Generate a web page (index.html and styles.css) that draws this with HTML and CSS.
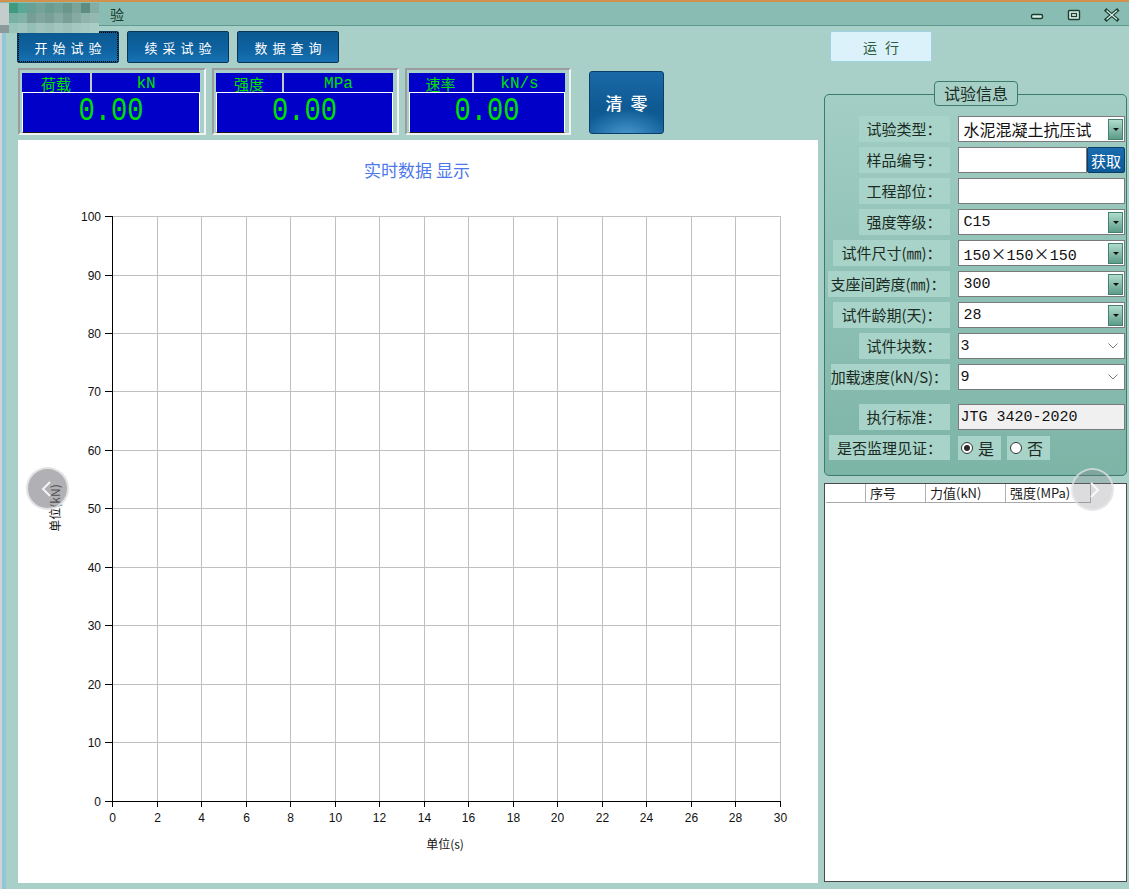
FILE: index.html
```html
<!DOCTYPE html>
<html lang="zh-CN">
<head>
<meta charset="utf-8">
<title>试验</title>
<link rel="stylesheet" href="styles.css">
</head>
<body>
<div class="window">
  <header class="titlebar">
    <svg class="mosaic" width="100" height="30" viewBox="0 0 100 30">
      <rect x="0" y="0" width="9" height="22" fill="#c4cccc"/>
      <rect x="0" y="22" width="9" height="8" fill="#8a9a9a"/>
      <rect x="9" y="0" width="9" height="10" fill="#3f9a7e"/><rect x="18" y="0" width="9" height="10" fill="#5aa898"/><rect x="27" y="0" width="9" height="10" fill="#68a096"/><rect x="36" y="0" width="9" height="10" fill="#76a398"/><rect x="45" y="0" width="9" height="10" fill="#6c9c90"/><rect x="54" y="0" width="9" height="10" fill="#74a196"/><rect x="63" y="0" width="9" height="10" fill="#6a968a"/><rect x="72" y="0" width="9" height="10" fill="#7ca398"/><rect x="81" y="0" width="9" height="10" fill="#5e8c7e"/><rect x="90" y="0" width="9" height="10" fill="#86ada3"/>
      <rect x="9" y="10" width="9" height="10" fill="#78b0a4"/><rect x="18" y="10" width="9" height="10" fill="#80b2a8"/><rect x="27" y="10" width="9" height="10" fill="#769e96"/><rect x="36" y="10" width="9" height="10" fill="#80a69e"/><rect x="45" y="10" width="9" height="10" fill="#78a098"/><rect x="54" y="10" width="9" height="10" fill="#84aaa2"/><rect x="63" y="10" width="9" height="10" fill="#789e96"/><rect x="72" y="10" width="9" height="10" fill="#84aaa2"/><rect x="81" y="10" width="9" height="10" fill="#8eb4ac"/><rect x="90" y="10" width="9" height="10" fill="#94b9b1"/>
      <rect x="9" y="20" width="9" height="10" fill="#98c4ba"/><rect x="18" y="20" width="9" height="10" fill="#a0c6be"/><rect x="27" y="20" width="9" height="10" fill="#94beb6"/><rect x="36" y="20" width="9" height="10" fill="#a0c4bc"/><rect x="45" y="20" width="9" height="10" fill="#9ac0b8"/><rect x="54" y="20" width="9" height="10" fill="#a2c6be"/><rect x="63" y="20" width="9" height="10" fill="#9cc2ba"/><rect x="72" y="20" width="9" height="10" fill="#a4c8c0"/><rect x="81" y="20" width="9" height="10" fill="#a6cac2"/><rect x="90" y="20" width="9" height="10" fill="#a8cec6"/>
    </svg>
    <span class="title">验</span>
    <svg class="winctl" width="100" height="23" viewBox="0 0 100 23">
      <rect x="6.5" y="12.5" width="11" height="4" rx="1.5" fill="#dcece6" stroke="#17402e" stroke-width="1.4"/>
      <rect x="43.5" y="8.5" width="11" height="9" rx="1" fill="#dcece6" stroke="#17402e" stroke-width="1.4"/>
      <rect x="46.5" y="11.5" width="5" height="3" fill="none" stroke="#17402e" stroke-width="1.2"/>
      <path d="M81.5 8.5 L92 17.5 M92 8.5 L81.5 17.5" stroke="#17402e" stroke-width="3.6" stroke-linecap="square"/>
      <path d="M81.5 8.5 L92 17.5 M92 8.5 L81.5 17.5" stroke="#dcece6" stroke-width="1.2"/>
    </svg>
  </header>

  <div class="main">
    <section class="left">
      <div class="toolbar">
        <button class="tbtn focus">开始试验</button>
        <button class="tbtn">续采试验</button>
        <button class="tbtn">数据查询</button>
      </div>

      <div class="gauges">
        <div class="gauge g1">
          <div class="ghead"><span class="gname">荷载</span><span class="gunit">kN</span></div>
          <div class="gval"><span>0.00</span></div>
        </div>
        <div class="gauge g2">
          <div class="ghead"><span class="gname">强度</span><span class="gunit">MPa</span></div>
          <div class="gval"><span>0.00</span></div>
        </div>
        <div class="gauge g3">
          <div class="ghead"><span class="gname">速率</span><span class="gunit">kN/s</span></div>
          <div class="gval"><span>0.00</span></div>
        </div>
        <button class="clear">清零</button>
      </div>

      <div class="chart">
        <svg class="plot" width="800" height="743" viewBox="0 0 800 743">
          <text x="399" y="37" class="ctitle" text-anchor="middle">实时数据 显示</text>
          <g stroke="#c0c0c0" stroke-width="1">
            <line x1="139.5" y1="76.5" x2="139.5" y2="661.5"/>
            <line x1="183.5" y1="76.5" x2="183.5" y2="661.5"/>
            <line x1="228.5" y1="76.5" x2="228.5" y2="661.5"/>
            <line x1="272.5" y1="76.5" x2="272.5" y2="661.5"/>
            <line x1="317.5" y1="76.5" x2="317.5" y2="661.5"/>
            <line x1="361.5" y1="76.5" x2="361.5" y2="661.5"/>
            <line x1="406.5" y1="76.5" x2="406.5" y2="661.5"/>
            <line x1="450.5" y1="76.5" x2="450.5" y2="661.5"/>
            <line x1="495.5" y1="76.5" x2="495.5" y2="661.5"/>
            <line x1="539.5" y1="76.5" x2="539.5" y2="661.5"/>
            <line x1="584.5" y1="76.5" x2="584.5" y2="661.5"/>
            <line x1="628.5" y1="76.5" x2="628.5" y2="661.5"/>
            <line x1="673.5" y1="76.5" x2="673.5" y2="661.5"/>
            <line x1="717.5" y1="76.5" x2="717.5" y2="661.5"/>
            <line x1="762.5" y1="76.5" x2="762.5" y2="661.5"/>
            <line x1="94.5" y1="76.5" x2="762.5" y2="76.5"/>
            <line x1="94.5" y1="135.5" x2="762.5" y2="135.5"/>
            <line x1="94.5" y1="193.5" x2="762.5" y2="193.5"/>
            <line x1="94.5" y1="251.5" x2="762.5" y2="251.5"/>
            <line x1="94.5" y1="310.5" x2="762.5" y2="310.5"/>
            <line x1="94.5" y1="368.5" x2="762.5" y2="368.5"/>
            <line x1="94.5" y1="427.5" x2="762.5" y2="427.5"/>
            <line x1="94.5" y1="485.5" x2="762.5" y2="485.5"/>
            <line x1="94.5" y1="544.5" x2="762.5" y2="544.5"/>
            <line x1="94.5" y1="602.5" x2="762.5" y2="602.5"/>
          </g>
          <g stroke="#000" stroke-width="1">
            <line x1="94.5" y1="76" x2="94.5" y2="662"/>
            <line x1="94" y1="661.5" x2="763" y2="661.5"/>
            <line x1="87" y1="76.5" x2="94.5" y2="76.5"/>
            <line x1="87" y1="135.5" x2="94.5" y2="135.5"/>
            <line x1="87" y1="193.5" x2="94.5" y2="193.5"/>
            <line x1="87" y1="251.5" x2="94.5" y2="251.5"/>
            <line x1="87" y1="310.5" x2="94.5" y2="310.5"/>
            <line x1="87" y1="368.5" x2="94.5" y2="368.5"/>
            <line x1="87" y1="427.5" x2="94.5" y2="427.5"/>
            <line x1="87" y1="485.5" x2="94.5" y2="485.5"/>
            <line x1="87" y1="544.5" x2="94.5" y2="544.5"/>
            <line x1="87" y1="602.5" x2="94.5" y2="602.5"/>
            <line x1="87" y1="661.5" x2="94.5" y2="661.5"/>
            <line x1="94.5" y1="661.5" x2="94.5" y2="667"/>
            <line x1="139.5" y1="661.5" x2="139.5" y2="667"/>
            <line x1="183.5" y1="661.5" x2="183.5" y2="667"/>
            <line x1="228.5" y1="661.5" x2="228.5" y2="667"/>
            <line x1="272.5" y1="661.5" x2="272.5" y2="667"/>
            <line x1="317.5" y1="661.5" x2="317.5" y2="667"/>
            <line x1="361.5" y1="661.5" x2="361.5" y2="667"/>
            <line x1="406.5" y1="661.5" x2="406.5" y2="667"/>
            <line x1="450.5" y1="661.5" x2="450.5" y2="667"/>
            <line x1="495.5" y1="661.5" x2="495.5" y2="667"/>
            <line x1="539.5" y1="661.5" x2="539.5" y2="667"/>
            <line x1="584.5" y1="661.5" x2="584.5" y2="667"/>
            <line x1="628.5" y1="661.5" x2="628.5" y2="667"/>
            <line x1="673.5" y1="661.5" x2="673.5" y2="667"/>
            <line x1="717.5" y1="661.5" x2="717.5" y2="667"/>
            <line x1="762.5" y1="661.5" x2="762.5" y2="667"/>
          </g>
          <g class="ylab" text-anchor="end">
            <text x="83" y="81">100</text>
            <text x="83" y="140">90</text>
            <text x="83" y="198">80</text>
            <text x="83" y="256">70</text>
            <text x="83" y="315">60</text>
            <text x="83" y="373">50</text>
            <text x="83" y="432">40</text>
            <text x="83" y="490">30</text>
            <text x="83" y="549">20</text>
            <text x="83" y="607">10</text>
            <text x="83" y="666">0</text>
          </g>
          <g class="xlab" text-anchor="middle">
            <text x="94.5" y="682">0</text>
            <text x="139.5" y="682">2</text>
            <text x="183.5" y="682">4</text>
            <text x="228.5" y="682">6</text>
            <text x="272.5" y="682">8</text>
            <text x="317.5" y="682">10</text>
            <text x="361.5" y="682">12</text>
            <text x="406.5" y="682">14</text>
            <text x="450.5" y="682">16</text>
            <text x="495.5" y="682">18</text>
            <text x="539.5" y="682">20</text>
            <text x="584.5" y="682">22</text>
            <text x="628.5" y="682">24</text>
            <text x="673.5" y="682">26</text>
            <text x="717.5" y="682">28</text>
            <text x="762.5" y="682">30</text>
          </g>
          <text class="atitle" x="427" y="709" text-anchor="middle">单位(s)</text>
          <text class="atitle" x="0" y="0" text-anchor="middle" transform="translate(42 368) rotate(-90)">单位(kN)</text>
        </svg>
      </div>
    </section>

    <aside class="right">
      <button class="run">运行</button>
      <div class="group">
        <div class="legend">试验信息</div>
        <div class="gbox">
          <div class="row">
            <div class="lw"><span class="lab">试验类型：</span></div>
            <div class="field combo"><span class="cn">水泥混凝土抗压试</span><i class="ddb"></i></div>
          </div>
          <div class="row">
            <div class="lw"><span class="lab">样品编号：</span></div>
            <div class="field short"></div><button class="fetch">获取</button>
          </div>
          <div class="row">
            <div class="lw"><span class="lab">工程部位：</span></div>
            <div class="field"></div>
          </div>
          <div class="row">
            <div class="lw"><span class="lab">强度等级：</span></div>
            <div class="field combo"><span>C15</span><i class="ddb"></i></div>
          </div>
          <div class="row">
            <div class="lw"><span class="lab">试件尺寸(㎜)：</span></div>
            <div class="field combo"><span>150<span class="cn">×</span>150<span class="cn">×</span>150</span><i class="ddb"></i></div>
          </div>
          <div class="row">
            <div class="lw"><span class="lab tight">支座间跨度(㎜)：</span></div>
            <div class="field combo"><span>300</span><i class="ddb"></i></div>
          </div>
          <div class="row">
            <div class="lw"><span class="lab">试件龄期(天)：</span></div>
            <div class="field combo"><span>28</span><i class="ddb"></i></div>
          </div>
          <div class="row">
            <div class="lw"><span class="lab">试件块数：</span></div>
            <div class="field select"><span>3</span><svg class="chev" width="10" height="6" viewBox="0 0 10 6"><polyline points="0.5,0.5 5,5 9.5,0.5" fill="none" stroke="#7a7a7a" stroke-width="1"/></svg></div>
          </div>
          <div class="row">
            <div class="lw"><span class="lab tighter">加载速度(kN/S)：</span></div>
            <div class="field select"><span>9</span><svg class="chev" width="10" height="6" viewBox="0 0 10 6"><polyline points="0.5,0.5 5,5 9.5,0.5" fill="none" stroke="#7a7a7a" stroke-width="1"/></svg></div>
          </div>
          <div class="row sep">
            <div class="lw"><span class="lab">执行标准：</span></div>
            <div class="field ro"><span>JTG 3420-2020</span></div>
          </div>
          <div class="row radios">
            <div class="lw"><span class="lab">是否监理见证：</span></div>
            <div class="opts">
              <span class="opt"><i class="rb on"></i>是</span>
              <span class="opt"><i class="rb"></i>否</span>
            </div>
          </div>
        </div>
      </div>
      <div class="table">
        <div class="thead">
          <span></span><span>序号</span><span>力值(kN)</span><span>强度(MPa)</span>
        </div>
      </div>
    </aside>
  </div>

  <div class="nav nav-prev"><svg width="12" height="16" viewBox="0 0 12 16"><polyline points="10,1 3,8 10,15" fill="none" stroke="#f4f4f4" stroke-width="2"/></svg></div>
  <div class="nav nav-next"><svg width="12" height="16" viewBox="0 0 12 16"><polyline points="2,1 9,8 2,15" fill="none" stroke="#f8f8f8" stroke-width="2"/></svg></div>
</div>
</body>
</html>
```

FILE: styles.css
```css
* { box-sizing: border-box; margin: 0; padding: 0; }
html, body { width: 1129px; height: 889px; overflow: hidden; }
body {
  font-family: "Noto Sans CJK SC", "Liberation Sans", sans-serif;
  background: #a9d0c8;
  color: #1b2b23;
}
button { font: inherit; cursor: default; }

.window {
  position: relative;
  width: 1129px;
  height: 889px;
  display: flex;
  flex-direction: column;
  background: #a9d0c8;
}

/* title bar */
.titlebar {
  position: relative;
  flex: none;
  height: 26px;
  display: flex;
  align-items: center;
  background: #89bdb3;
  border-top: 2px solid #d2914c;
  border-bottom: 1px solid #5f9a8f;
}
.mosaic { position: absolute; left: 0; top: 1px; z-index: 1; }
.title {
  margin-left: 110px;
  font-size: 14px;
  line-height: 16px;
  color: #18362a;
}
.winctl { margin-left: auto; margin-right: 4px; display: block; }

/* main */
.main {
  flex: 1;
  display: flex;
  border-left: 2px solid #d0d4d4;
  box-shadow: inset 4px 0 0 #93c7d5;
}

.left {
  width: 816px;
  padding: 5px 0 0 15px;
  display: flex;
  flex-direction: column;
}

.toolbar { display: flex; gap: 8px; height: 32px; }
.tbtn {
  width: 102px;
  height: 32px;
  background: linear-gradient(#0b5990, #0e62a0 55%, #1872b2);
  border: 1px solid #0a3557;
  border-radius: 2px;
  color: #fff;
  font-size: 13px;
  letter-spacing: 5px;
  padding-left: 5px;
}
.tbtn.focus { outline: 1px dotted #000; outline-offset: -2px; }

/* gauges */
.gauges {
  display: flex;
  align-items: flex-start;
  gap: 6px;
  height: 67px;
  margin: 5px 0 0 1px;
}
.gauge {
  height: 67px;
  border: 2px solid;
  border-color: #9c9c9c #f2f2f2 #f2f2f2 #9c9c9c;
  padding: 3px 4px 0 2px;
  display: flex;
  flex-direction: column;
  gap: 1px;
}
.g1 { width: 188px; }
.g2 { width: 187px; }
.g3 { width: 166px; }
.ghead {
  height: 18px;
  display: grid;
  gap: 2px;
  background: #c4c8c8;
}
.g1 .ghead { grid-template-columns: 68px 1fr; }
.g2 .ghead { grid-template-columns: 66px 1fr; }
.g3 .ghead { grid-template-columns: 63px 1fr; }
.ghead span {
  background: #0000c8;
  color: #00e000;
  display: flex;
  align-items: center;
  justify-content: center;
  font-size: 15px;
  line-height: 18px;
}
.ghead .gname { padding-top: 2px; }
.ghead .gunit { font-family: "Liberation Mono", monospace; font-size: 16px; padding-top: 2px; }
.gval {
  height: 41px;
  background: #0000c8;
  border: 1px solid #fff;
  border-bottom-color: #1a1a1a;
  display: flex;
  align-items: center;
  justify-content: center;
  color: #00e000;
  font-family: "Liberation Mono", monospace;
  font-size: 27px;
}
.gval span { display: inline-block; transform: scaleY(1.25); margin-top: -4px; }

.clear {
  width: 75px;
  height: 63px;
  margin: 3px 0 0 12px;
  border: 1px solid #0b3e68;
  border-radius: 3px;
  background:
    radial-gradient(ellipse 60% 45% at 50% 105%, rgba(90,170,220,.75), rgba(90,170,220,0) 100%),
    linear-gradient(#1a69a7, #0e5992 60%, #12609c);
  color: #fff;
  font-size: 17px;
  font-weight: 500;
  letter-spacing: 8px;
  padding-left: 8px;
}

/* chart */
.chart {
  margin: 5px 0 0 1px;
  width: 800px;
  height: 743px;
  background: #fff;
}
.plot { display: block; }
.ctitle { font-family: "Noto Sans CJK SC", sans-serif; font-size: 17px; fill: #4d78ea; }
.ylab text, .xlab text { font-family: "Liberation Sans", Arial, sans-serif; font-size: 12px; fill: #111; }
.atitle { font-family: "Noto Sans CJK SC", sans-serif; font-size: 12px; fill: #111; }

/* right column */
.right {
  width: 303px;
  margin-left: 6px;
  padding-top: 5px;
  display: flex;
  flex-direction: column;
}
.run {
  align-self: flex-start;
  margin-left: 6px;
  width: 102px;
  height: 31px;
  background: #dcf2fa;
  border: 1px solid #9fd2e4;
  border-radius: 2px;
  color: #2d5b3e;
  font-size: 14px;
  letter-spacing: 8px;
  padding-left: 8px;
}

.group { position: relative; margin-top: 32px; }
.legend {
  position: absolute;
  left: 110px;
  top: -13px;
  width: 84px;
  height: 25px;
  background: #a6d0c6;
  border: 1px solid #3d7c6c;
  border-radius: 4px;
  font-size: 16px;
  line-height: 23px;
  text-align: center;
  color: #1b2b23;
  z-index: 1;
}
.gbox {
  height: 382px;
  border: 1px solid #3d7c6c;
  border-radius: 5px;
  background: linear-gradient(#a3cec5, #7cb4a6);
  padding: 21px 1px 0 1px;
  display: flex;
  flex-direction: column;
  gap: 5px;
}
.row { display: flex; height: 26px; }
.row.sep { margin-top: 9px; }
.row.radios { height: 25px; }
.lw {
  width: 124px;
  height: 100%;
  display: flex;
  justify-content: flex-end;
  overflow: hidden;
}
.lab {
  flex: none;
  height: 100%;
  background: #a8d3c8;
  padding: 0 8px 0 8px;
  font-size: 15px;
  line-height: 26px;
  white-space: nowrap;
  color: #1b2b23;
}
.lab.tight { padding: 0 4px 0 2px; }
.lab.tighter { padding: 0 2px 0 0; letter-spacing: -0.2px; }

.field {
  margin-left: 8px;
  width: 168px;
  height: 26px;
  background: #fff;
  border: 1px solid #7a7a7a;
  display: flex;
  align-items: center;
  padding-left: 5px;
  font-family: "Liberation Mono", "Noto Sans CJK SC", monospace;
  font-size: 15px;
  color: #111;
  white-space: nowrap;
}
.field .cn { font-family: "Noto Sans CJK SC", sans-serif; font-size: 16px; }
.field.short { width: 130px; }
.field.select { padding-left: 2px; }
.field.ro { background: #f0f0f0; padding-left: 2px; }
.ddb {
  margin-left: auto;
  margin-right: 1px;
  width: 15px;
  height: 21px;
  border: 1px solid #44806e;
  background: linear-gradient(#b0dccc, #5d9b89);
  display: flex;
  align-items: center;
  justify-content: center;
}
.ddb::after {
  content: "";
  border-left: 3px solid transparent;
  border-right: 3px solid transparent;
  border-top: 3px solid #111;
}
.chev { margin-left: auto; margin-right: 6px; }
.fetch {
  width: 38px;
  height: 26px;
  background: linear-gradient(#1a6cae, #0c5a98);
  border: 1px solid #0c3d66;
  border-radius: 2px;
  color: #fff;
  font-size: 15px;
}

.opts { margin-left: 8px; display: flex; gap: 6px; height: 25px; padding-top: 1px; }
.opt {
  width: 43px;
  height: 24px;
  background: #a8d3c8;
  display: flex;
  align-items: center;
  gap: 5px;
  padding-left: 3px;
  font-size: 16px;
  color: #1b2b23;
}
.rb {
  width: 12px;
  height: 12px;
  border: 1px solid #333;
  border-radius: 50%;
  background: #fff;
  display: flex;
  align-items: center;
  justify-content: center;
}
.rb.on::after {
  content: "";
  width: 6px;
  height: 6px;
  border-radius: 50%;
  background: #2a2a2a;
}

/* table */
.table {
  margin-top: 7px;
  height: 399px;
  background: #fff;
  border: 1px solid #4a4a4a;
}
.thead {
  display: grid;
  grid-template-columns: 40px 60px 80px 85px;
  width: 265px;
  height: 19px;
  border-bottom: 1px solid #a8a8a8;
  margin-left: 1px;
}
.thead span {
  border-right: 1px solid #b0b0b0;
  font-size: 13px;
  line-height: 18px;
  padding-left: 4px;
  color: #1a1a1a;
  white-space: nowrap;
}

/* carousel nav overlays */
.nav {
  position: absolute;
  width: 43px;
  height: 43px;
  border-radius: 50%;
  display: flex;
  align-items: center;
  justify-content: center;
}
.nav-prev {
  left: 26px;
  top: 467px;
  background: rgba(120, 120, 128, .58);
  border: 2px solid rgba(232, 232, 232, .9);
  padding-right: 4px;
}
.nav-next {
  left: 1071px;
  top: 468px;
  background: rgba(128, 128, 135, .28);
  border: 2px solid rgba(235, 235, 235, .7);
  padding-left: 4px;
}
```
